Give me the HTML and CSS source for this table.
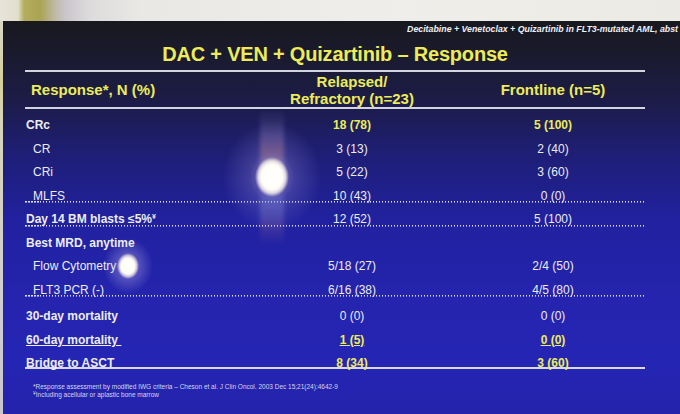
FILE: index.html
```html
<!DOCTYPE html>
<html lang="en">
<head>
<meta charset="utf-8">
<title>DAC + VEN + Quizartinib – Response</title>
<link rel="stylesheet" href="styles.css">
</head>
<body>
<div class="page">
  <div class="wall"></div>
  <div class="main">
    <div class="edge"></div>
    <div class="slide">
      <div class="source">Decitabine + Venetoclax + Quizartinib in FLT3-mutated AML, abst</div>
      <h1 class="title">DAC + VEN + Quizartinib – Response</h1>
      <div class="table">
        <div class="head">
          <div class="hcell hlabel">Response*, N (%)</div>
          <div class="hcell">Relapsed/<br>Refractory (n=23)</div>
          <div class="hcell">Frontline (n=5)</div>
        </div>
        <div class="row"><div class="label b">CRc</div><div class="val y b">18 (78)</div><div class="val y b">5 (100)</div></div>
        <div class="row"><div class="label sub">CR</div><div class="val">3 (13)</div><div class="val">2 (40)</div></div>
        <div class="row"><div class="label sub">CRi</div><div class="val">5 (22)</div><div class="val">3 (60)</div></div>
        <div class="row dotted"><div class="label sub">MLFS</div><div class="val">10 (43)</div><div class="val">0 (0)</div></div>
        <div class="row dotted"><div class="label b">Day 14 BM blasts ≤5%<sup>¥</sup></div><div class="val">12 (52)</div><div class="val">5 (100)</div></div>
        <div class="row"><div class="label b">Best MRD, anytime</div><div class="val"></div><div class="val"></div></div>
        <div class="row"><div class="label sub">Flow Cytometry (-)</div><div class="val">5/18 (27)</div><div class="val">2/4 (50)</div></div>
        <div class="row dotted"><div class="label sub">FLT3 PCR (-)</div><div class="val">6/16 (38)</div><div class="val">4/5 (80)</div></div>
        <div class="row tall"><div class="label b">30-day mortality</div><div class="val">0 (0)</div><div class="val">0 (0)</div></div>
        <div class="row tall"><div class="label b"><u>60-day mortality&nbsp;</u></div><div class="val y b"><u>1 (5)</u></div><div class="val y b"><u>0 (0)</u></div></div>
        <div class="row tall last"><div class="label b">Bridge to ASCT</div><div class="val y b">8 (34)</div><div class="val y b">3 (60)</div></div>
      </div>
      <div class="notes">
        <div>*Response assessment by modified IWG criteria – Cheson et al. J Clin Oncol. 2003 Dec 15;21(24):4642-9</div>
        <div><sup>¥</sup>Including acellular or aplastic bone marrow</div>
      </div>
      <div class="streak s1"></div>
      <div class="glare g1"></div>
      <div class="glare g2"></div>
    </div>
  </div>
</div>
</body>
</html>
```

FILE: styles.css
```css
html, body {
  margin: 0;
  padding: 0;
}
body {
  width: 680px;
  height: 414px;
  overflow: hidden;
  background: #e4e2dc;
  font-family: "Liberation Sans", Arial, sans-serif;
}
.page {
  display: flex;
  flex-direction: column;
  width: 680px;
  height: 414px;
}
.wall {
  height: 21px;
  flex: none;
  background:
    linear-gradient(90deg, #e6e4da 0, #e2dfcc 18px, #b3ad5e 24px, #aaa352 40px, #bfb9a6 55px, #cbc6cc 66px, #dedbdc 90px, #e9e8e4 140px, #efeeea 400px, #eceae4 680px);
}
.main {
  flex: 1;
  display: flex;
  min-height: 0;
}
.edge {
  width: 3px;
  flex: none;
  background: linear-gradient(180deg, #d8d6c8 0, #d6cf9c 60px, #d8d4b8 100px, #cfcdd4 300px, #c8c6cc 393px);
}
.slide {
  flex: 1;
  position: relative;
  overflow: hidden;
  display: flex;
  flex-direction: column;
  background:
    linear-gradient(180deg, #18181f 0, #1a1a2c 30px, #1c1c48 80px, #1e1e74 130px, #2121a0 200px, #2424ae 280px, #2525b4 340px, #2323ac 393px);
}
.source {
  text-align: right;
  padding: 3px 2px 0 0;
  font-size: 8.8px;
  line-height: 10px;
  font-weight: bold;
  font-style: italic;
  color: #f0f0f4;
}
.title {
  margin: 8px 0 0 22px;
  width: 620px;
  text-align: center;
  font-size: 20px;
  line-height: 24px;
  font-weight: bold;
  color: #ecec5a;
  letter-spacing: -0.2px;
}
.table {
  margin: 4px 0 0 22px;
  width: 620px;
  border-top: 2px solid #d4d4e0;
}
.head {
  display: grid;
  grid-template-columns: 218px 218px 184px;
  align-items: center;
  height: 35px;
  border-bottom: 2px solid #d4d4e0;
  color: #ecec5a;
  font-size: 15px;
  line-height: 17px;
  font-weight: bold;
}
.hcell {
  text-align: center;
}
.hcell.hlabel {
  text-align: left;
  padding-left: 6px;
}
.row {
  display: grid;
  grid-template-columns: 218px 218px 184px;
  align-items: center;
  box-sizing: border-box;
  height: 23.5px;
  padding-top: 9px;
  font-size: 12px;
  line-height: 14px;
  color: #ececf2;
}
.row.dotted {
  padding-bottom: 2px;
  background: repeating-linear-gradient(90deg, #dcdcee 0 1.5px, rgba(0, 0, 0, 0) 1.5px 3px) left bottom / 100% 1.6px no-repeat;
}
.row.tall {
  height: 24px;
  padding-top: 12px;
}
.row.last {
  padding-top: 11px;
  border-bottom: 2px solid #d8d8e6;
}
.label {
  padding-left: 1px;
  white-space: nowrap;
}
.label.sub {
  padding-left: 8px;
}
.val {
  text-align: center;
}
.b {
  font-weight: bold;
}
.y {
  color: #ecec5a;
}
sup {
  font-size: 7px;
  line-height: 0;
  vertical-align: 4px;
}
.notes {
  margin: 14px 0 0 30px;
  font-size: 6.5px;
  line-height: 7.5px;
  color: #d6d6e6;
}
.notes sup {
  font-size: 5px;
  vertical-align: 2px;
}
.glare {
  position: absolute;
  pointer-events: none;
  border-radius: 50%;
}
.g1 {
  left: 219px;
  top: 101px;
  width: 100px;
  height: 110px;
  background:
    radial-gradient(ellipse 17px 20px at 50% 50%, #ffffff 0, #fffef8 62%, rgba(255, 246, 236, 0.8) 80%, rgba(255, 240, 230, 0) 100%),
    radial-gradient(ellipse 50px 55px at 50% 50%, rgba(215, 205, 240, 0.6) 0, rgba(150, 140, 215, 0.28) 45%, rgba(100, 100, 200, 0) 100%);
}
.g2 {
  left: 100px;
  top: 217px;
  width: 50px;
  height: 56px;
  background:
    radial-gradient(ellipse 11px 13px at 50% 50%, #ffffff 0, #fffdf4 60%, rgba(255, 240, 230, 0.7) 80%, rgba(255, 240, 230, 0) 100%),
    radial-gradient(ellipse 25px 28px at 50% 50%, rgba(215, 205, 240, 0.5) 0, rgba(100, 100, 200, 0) 100%);
}
.streak {
  position: absolute;
  pointer-events: none;
}
.s1 {
  left: 257px;
  top: 88px;
  width: 24px;
  height: 136px;
  filter: blur(2px);
  background: linear-gradient(180deg, rgba(255, 255, 255, 0) 0, rgba(190, 170, 220, 0.25) 20%, rgba(255, 150, 120, 0.35) 33%, rgba(180, 210, 255, 0.3) 43%, rgba(255, 255, 255, 0) 55%, rgba(170, 200, 255, 0.25) 70%, rgba(255, 180, 150, 0.15) 85%, rgba(255, 255, 255, 0) 100%);
}
```
